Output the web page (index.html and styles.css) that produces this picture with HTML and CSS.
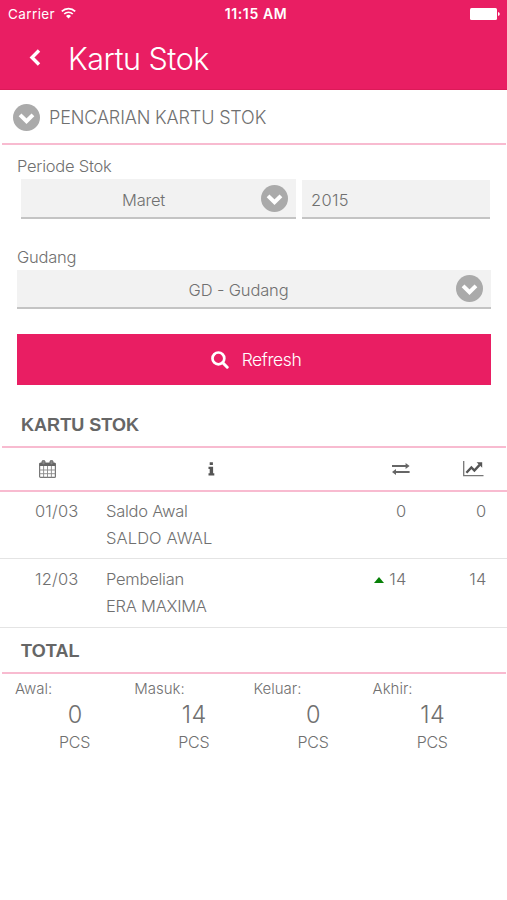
FILE: index.html
```html
<!DOCTYPE html>
<html lang="id">
<head>
    <meta charset="UTF-8">
    <meta name="viewport" content="width=device-width, initial-scale=1.0">
    <title>Kartu Stok</title>
    <link rel="stylesheet" href="styles.css">
</head>
<body>

<!-- shared icons -->
<svg class="sprite" width="0" height="0">
    <symbol id="chevron-circle" viewBox="0 0 26 26">
        <circle cx="13" cy="13" r="13" fill="#aaa"/>
        <path d="M6.8 10.4l6.2 6.2 6.2-6.2" fill="none" stroke="#fff" stroke-width="3.8"/>
    </symbol>
</svg>

<header class="header">
    <div class="status-bar">
        <span class="carrier">Carrier
            <svg class="wifi" viewBox="0 0 15 12">
                <path d="M0.8 4.4a9.5 9.5 0 0 1 13.4 0M3.2 7a6.1 6.1 0 0 1 8.6 0" fill="none" stroke="#fff" stroke-width="1.7"/>
                <path d="M5 8.9a3.6 3.6 0 0 1 5 0L7.5 11.4z" fill="#fff"/>
            </svg>
        </span>
        <span class="clock">11:15 AM</span>
        <svg class="battery" viewBox="0 0 30 12">
            <rect width="27" height="12" rx="1.5" fill="#fff"/>
            <path d="M28 4v4q1.8-.6 1.8-2T28 4z" fill="#fff"/>
        </svg>
    </div>
    <div class="title-bar">
        <svg class="back" viewBox="0 0 12 17">
            <path d="M10 1.5L3 8.5l7 7" fill="none" stroke="#fff" stroke-width="3.4"/>
        </svg>
        <h1>Kartu Stok</h1>
    </div>
</header>

<div class="search-title">
    <svg class="chevron"><use href="#chevron-circle"/></svg>
    <span>PENCARIAN KARTU STOK</span>
</div>

<div class="search-form">
    <div class="label">Periode Stok</div>
    <div class="period">
        <div class="field month">
            <span>Maret</span>
            <svg class="chevron"><use href="#chevron-circle"/></svg>
        </div>
        <div class="field year"><span>2015</span></div>
    </div>
    <div class="label label-gudang">Gudang</div>
    <div class="field gudang">
        <span>GD - Gudang</span>
        <svg class="chevron"><use href="#chevron-circle"/></svg>
    </div>
    <div class="button">
        <svg class="search" viewBox="0 0 18 18">
            <circle cx="7.4" cy="7.4" r="5.9" fill="none" stroke="#fff" stroke-width="2.7"/>
            <path d="M11.8 11.8l4.4 4.4" stroke="#fff" stroke-width="3" stroke-linecap="round"/>
        </svg>
        <span>Refresh</span>
    </div>
</div>

<h2 class="section">KARTU STOK</h2>

<div class="table-head">
    <div class="col-date">
        <svg width="17" height="18" viewBox="0 0 17 18">
            <rect x="0.6" y="3" width="15.8" height="14.4" rx="1" fill="none" stroke="#777" stroke-width="1.2"/>
            <path d="M0.6 3h15.8v3H.6z" fill="#666"/>
            <path d="M4.6 6v11.5M8.5 6v11.5M12.4 6v11.5M.6 10h15.8M.6 13.7h15.8" stroke="#888" stroke-width=".9"/>
            <rect x="3" y="0.5" width="3" height="4.3" rx="1.3" fill="#888" stroke="#666"/>
            <rect x="11" y="0.5" width="3" height="4.3" rx="1.3" fill="#888" stroke="#666"/>
        </svg>
    </div>
    <div class="col-info">
        <svg width="7" height="14" viewBox="0 0 7 14">
            <path d="M1.7.3h3.2v2.6H1.7zM.5 4.8h4.6v6.4h1.2v2.2H.5v-2.2h1.2V7H.5z" fill="#555"/>
        </svg>
    </div>
    <div class="col-move">
        <svg width="18" height="12" viewBox="0 0 18 12">
            <path d="M0 2h13.6V0L17.6 3.1 13.6 6.1V4.1H0zM17.6 8.1H4V6.1L0 9.1 4 12v-1.9h13.6z" fill="#666"/>
        </svg>
    </div>
    <div class="col-chart">
        <svg width="21" height="16" viewBox="0 0 21 16">
            <path d="M.7 0v14.6h19.8" fill="none" stroke="#777" stroke-width="1.3"/>
            <path d="M3.4 11.8l5-5.3 3 3 5.2-5.6" fill="none" stroke="#555" stroke-width="2.4"/>
            <path d="M13.6 1.2h5.6v5.6z" fill="#555"/>
        </svg>
    </div>
</div>

<div class="row">
    <div class="date">01/03</div>
    <div class="desc">Saldo Awal<br><span class="caps">SALDO AWAL</span></div>
    <div class="num">0</div>
    <div class="num">0</div>
</div>
<div class="row row-last">
    <div class="date">12/03</div>
    <div class="desc">Pembelian<br>ERA MAXIMA</div>
    <div class="num"><i class="up"></i>14</div>
    <div class="num">14</div>
</div>

<h2 class="section section-total">TOTAL</h2>

<div class="totals">
    <div class="total">
        <div class="name">Awal:</div>
        <div class="value">0</div>
        <div class="unit">PCS</div>
    </div>
    <div class="total">
        <div class="name">Masuk:</div>
        <div class="value">14</div>
        <div class="unit">PCS</div>
    </div>
    <div class="total">
        <div class="name">Keluar:</div>
        <div class="value">0</div>
        <div class="unit">PCS</div>
    </div>
    <div class="total">
        <div class="name">Akhir:</div>
        <div class="value">14</div>
        <div class="unit">PCS</div>
    </div>
</div>

</body>
</html>
```
FILE: styles.css
```css
* {
    box-sizing: border-box;
}

body {
    margin: 0;
    background: #fff;
    color: #707070;
    font-family: Inter, "Liberation Sans", sans-serif;
    font-weight: 300;
    font-size: 16.5px;
    letter-spacing: -0.25px;
}

svg {
    display: block;
    flex: none;
}

.sprite {
    position: absolute;
}

.header {
    height: 90px;
    background: #e91e63;
    border-bottom: 1px solid #dc1a58;
    color: #fff;
}

.status-bar {
    display: grid;
    grid-template-columns: 1fr auto 1fr;
    align-items: center;
    height: 27px;
    padding: 0 7px 0 8px;
    font-size: 13.5px;
}

.carrier {
    display: flex;
    align-items: center;
    gap: 6px;
    font-weight: 400;
    letter-spacing: 0.4px;
}

.wifi {
    width: 15px;
    height: 12px;
    margin-top: -2px;
}

.clock {
    padding-left: 4px;
    font-size: 14px;
    font-weight: 600;
    letter-spacing: 0.6px;
}

.battery {
    width: 30px;
    height: 12px;
    justify-self: end;
}

.title-bar {
    display: flex;
    align-items: center;
    height: 63px;
    padding-left: 29px;
}

.back {
    width: 12px;
    height: 17px;
    margin-top: -3px;
}

h1 {
    margin: 0 0 0 27px;
    font-size: 30.5px;
    font-weight: 300;
    letter-spacing: -0.5px;
}

.search-title {
    display: flex;
    align-items: center;
    gap: 9px;
    height: 55px;
    margin: 0 1px 0 2px;
    padding: 1px 0 0 11px;
    border-bottom: 2px solid #f8bbd0;
    font-size: 18px;
    letter-spacing: -0.15px;
}

.chevron {
    width: 27px;
    height: 27px;
}

.search-form {
    padding: 10px 16px 0 17px;
}

.label {
    height: 24px;
    line-height: 22px;
}

.period {
    display: flex;
    gap: 6px;
    height: 40px;
    padding-left: 4px;
}

.field {
    display: flex;
    align-items: center;
    background: #f2f2f2;
    border-bottom: 2px solid #c4c4c4;
}

.field .chevron {
    margin-right: 8px;
}

.field span {
    flex: 1;
    padding: 2px 0 0 5px;
    text-align: center;
}

.month {
    width: 275px;
}

.month span {
    padding-top: 3px;
}

.year {
    flex: 1;
    margin: 1px 1px 0 0;
    padding-left: 4px;
}

.year span {
    text-align: left;
    letter-spacing: 0.3px;
}

.label-gudang {
    margin-top: 27px;
}

.gudang {
    height: 39px;
}

.gudang span {
    padding-left: 4px;
    letter-spacing: -0.15px;
}

.button {
    display: flex;
    align-items: center;
    justify-content: center;
    gap: 13px;
    height: 51px;
    margin-top: 25px;
    padding-left: 4px;
    background: #e91e63;
    color: #fff;
    font-size: 17.5px;
    letter-spacing: -0.4px;
}

.search {
    width: 18px;
    height: 18px;
}

.section {
    height: 63px;
    margin: 0 1px 0 2px;
    padding: 19px 0 0 19px;
    border-bottom: 2px solid #f8bbd0;
    font-family: "Liberation Sans", sans-serif;
    font-size: 18px;
    font-weight: 700;
    line-height: 43px;
    letter-spacing: 0.05px;
    color: #666;
}

.table-head {
    display: grid;
    grid-template-columns: 95px 233px 109px 1fr;
    align-items: center;
    height: 44px;
    border-bottom: 2px solid #f8bbd0;
}

.col-date,
.col-info {
    justify-self: center;
}

.col-move {
    justify-self: end;
    padding-right: 27px;
}

.col-chart {
    padding-left: 26px;
}

.row {
    display: grid;
    grid-template-columns: 78.5px 250px 78px 80px;
    height: 67px;
    padding-top: 6px;
    border-bottom: 1px solid #e4e4e4;
    line-height: 27px;
}

.row-last {
    height: 69px;
    padding-top: 7px;
}

.date {
    text-align: right;
    letter-spacing: 0.2px;
}

.desc {
    padding-left: 27.5px;
}

.caps {
    letter-spacing: 0.1px;
}

.num {
    text-align: right;
    letter-spacing: 0.2px;
}

.up {
    display: inline-block;
    margin-right: 5px;
    border: 5.5px solid transparent;
    border-top: 0;
    border-bottom: 6px solid #078007;
    vertical-align: 2px;
}

.section-total {
    height: 46px;
    padding-top: 2px;
}

.totals {
    display: grid;
    grid-template-columns: repeat(4, 119.2px);
    padding: 4px 0 0 15px;
}

.name {
    font-size: 15px;
    line-height: 21px;
    letter-spacing: 0;
}

.value {
    padding-left: 1px;
    font-size: 23.5px;
    line-height: 32px;
    text-align: center;
    letter-spacing: 0.4px;
}

.unit {
    font-size: 16px;
    line-height: 22px;
    text-align: center;
}
```
